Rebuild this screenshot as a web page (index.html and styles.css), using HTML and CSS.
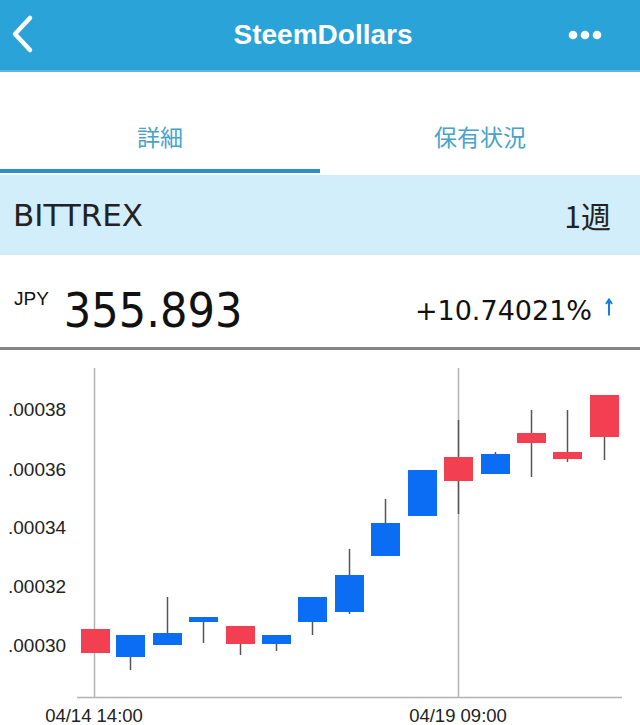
FILE: index.html
```html
<!DOCTYPE html>
<html lang="ja">
<head>
    <meta charset="UTF-8">
    <meta name="viewport" content="width=device-width, initial-scale=1.0">
    <title>SteemDollars</title>
    <link rel="stylesheet" href="styles.css">
</head>
<body>
    <header class="nav-bar">
        <svg class="nav-back" width="40" height="70" viewBox="0 0 40 70">
            <path d="M30 18 L15 34 L30 50" fill="none" stroke="#fff" stroke-width="4.5" stroke-linecap="round" stroke-linejoin="round"/>
        </svg>
        <h1 class="nav-title">SteemDollars</h1>
        <svg class="nav-more" width="34" height="10" viewBox="0 0 34 10">
            <circle cx="5" cy="5" r="4.3" fill="#fff"/>
            <circle cx="17" cy="5" r="4.3" fill="#fff"/>
            <circle cx="29" cy="5" r="4.3" fill="#fff"/>
        </svg>
    </header>

    <nav class="tabs">
        <div class="tab tab-active">詳細</div>
        <div class="tab">保有状況</div>
    </nav>

    <div class="exchange-bar">
        <span class="exchange-name">BITTREX</span>
        <span class="exchange-range">1週</span>
    </div>

    <div class="price-row">
        <div class="price">
            <span class="price-currency">JPY</span>
            <span class="price-value">355.893</span>
        </div>
        <div class="change">
            <span class="change-value">+10.74021%</span>
            <svg class="change-arrow" width="8" height="18" viewBox="0 0 8 18">
                <path d="M4 17.5 V2 M1 6 L4 1.5 L7 6" fill="none" stroke="#1a7be0" stroke-width="2"/>
            </svg>
        </div>
    </div>

    <div class="chart">
        <svg width="640" height="375" viewBox="0 0 640 375">
            <g class="grid">
                <line x1="94.5" y1="18" x2="94.5" y2="347"/>
                <line x1="458.5" y1="18" x2="458.5" y2="347"/>
                <line x1="77" y1="347.5" x2="622" y2="347.5"/>
            </g>
            <g class="y-labels">
                <text x="8" y="66">.00038</text>
                <text x="8" y="126">.00036</text>
                <text x="8" y="184">.00034</text>
                <text x="8" y="243">.00032</text>
                <text x="8" y="302">.00030</text>
            </g>
            <g class="x-labels">
                <text x="94" y="372" text-anchor="middle">04/14 14:00</text>
                <text x="458" y="372" text-anchor="middle">04/19 09:00</text>
            </g>
            <g class="wicks">
                <line x1="130.5" y1="307" x2="130.5" y2="320"/>
                <line x1="167.5" y1="247" x2="167.5" y2="283"/>
                <line x1="203.5" y1="272" x2="203.5" y2="293"/>
                <line x1="240.5" y1="294" x2="240.5" y2="305"/>
                <line x1="276.5" y1="294" x2="276.5" y2="301"/>
                <line x1="312.5" y1="272" x2="312.5" y2="285"/>
                <line x1="349.5" y1="199" x2="349.5" y2="264"/>
                <line x1="385.5" y1="149" x2="385.5" y2="173"/>
                <line x1="458.5" y1="70" x2="458.5" y2="164"/>
                <line x1="495.5" y1="102" x2="495.5" y2="104"/>
                <line x1="531.5" y1="60" x2="531.5" y2="127"/>
                <line x1="567.5" y1="60" x2="567.5" y2="112"/>
                <line x1="604.5" y1="87" x2="604.5" y2="110"/>
            </g>
            <g class="candles">
                <rect class="down" x="81" y="279" width="29" height="24"/>
                <rect class="up" x="116" y="285" width="29" height="22"/>
                <rect class="up" x="153" y="283" width="29" height="12"/>
                <rect class="up" x="189" y="267" width="29" height="5"/>
                <rect class="down" x="226" y="276" width="29" height="18"/>
                <rect class="up" x="262" y="285" width="29" height="9"/>
                <rect class="up" x="298" y="247" width="29" height="25"/>
                <rect class="up" x="335" y="225" width="29" height="37"/>
                <rect class="up" x="371" y="173" width="29" height="33"/>
                <rect class="up" x="408" y="120" width="29" height="46"/>
                <rect class="down" x="444" y="107" width="29" height="24"/>
                <rect class="up" x="481" y="104" width="29" height="20"/>
                <rect class="down" x="517" y="83" width="29" height="10"/>
                <rect class="down" x="553" y="102" width="29" height="7"/>
                <rect class="down" x="590" y="45" width="29" height="42"/>
            </g>
        </svg>
    </div>
</body>
</html>
```

FILE: styles.css
```css
/* App screen */
body {
    margin: 0;
    font-family: 'Liberation Sans', 'Noto Sans CJK JP', sans-serif;
    background: #fff;
    color: #111;
    width: 640px;
    overflow: hidden;
}

.nav-bar {
    height: 70px;
    background: #29a3d8;
    border-bottom: 2px solid #5fb8e2;
    display: flex;
    align-items: center;
    justify-content: space-between;
    padding: 0 38px 0 0;
}

.nav-back {
    display: block;
}

.nav-title {
    margin: 0 0 0 38px;
    font-size: 28px;
    font-weight: bold;
    color: #fff;
}

.nav-more {
    display: block;
}

.tabs {
    display: flex;
    height: 101px;
}

.tab {
    flex: 1;
    display: flex;
    align-items: center;
    justify-content: center;
    padding-top: 30px;
    font-family: 'Noto Sans CJK JP', sans-serif;
    font-size: 23px;
    color: #48a3c9;
    border-bottom: 4px solid transparent;
}

.tab-active {
    border-bottom-color: #2a8fcd;
}

.exchange-bar {
    height: 80px;
    background: #d2eefa;
    display: flex;
    align-items: center;
    justify-content: space-between;
    padding: 0 29px 0 13px;
    margin-top: 2px;
}

.exchange-name {
    font-family: 'DejaVu Sans', sans-serif;
    font-size: 31px;
    color: #222;
}

.exchange-range {
    font-family: 'Noto Sans CJK JP', sans-serif;
    font-size: 30px;
    color: #222;
}

.price-row {
    height: 74px;
    display: flex;
    align-items: center;
    justify-content: space-between;
    padding: 18px 27px 0 14px;
    border-bottom: 3px solid #858585;
}

.price {
    display: flex;
    align-items: flex-start;
}

.price-currency {
    font-family: 'Liberation Sans', sans-serif;
    font-size: 19px;
    margin-top: 3px;
    margin-right: 15px;
}

.price-value {
    font-family: 'DejaVu Sans Condensed', sans-serif;
    font-size: 48px;
    line-height: 50px;
    color: #111;
}

.change {
    display: flex;
    align-items: center;
    gap: 13px;
}

.change-value {
    font-family: 'DejaVu Sans', sans-serif;
    font-size: 27px;
    color: #111;
}

.change-arrow {
    display: block;
    margin-top: -6px;
}

.chart svg {
    display: block;
}

.grid line {
    stroke: #b3b3b3;
    stroke-width: 1.5;
}

.y-labels text,
.x-labels text {
    font-family: 'Liberation Sans', sans-serif;
    font-size: 19px;
    fill: #222;
}

.x-labels text {
    font-size: 18.5px;
}

.wicks line {
    stroke: #555;
    stroke-width: 1.5;
}

.candles .up {
    fill: #0b6cf4;
}

.candles .down {
    fill: #f33f52;
}
```
